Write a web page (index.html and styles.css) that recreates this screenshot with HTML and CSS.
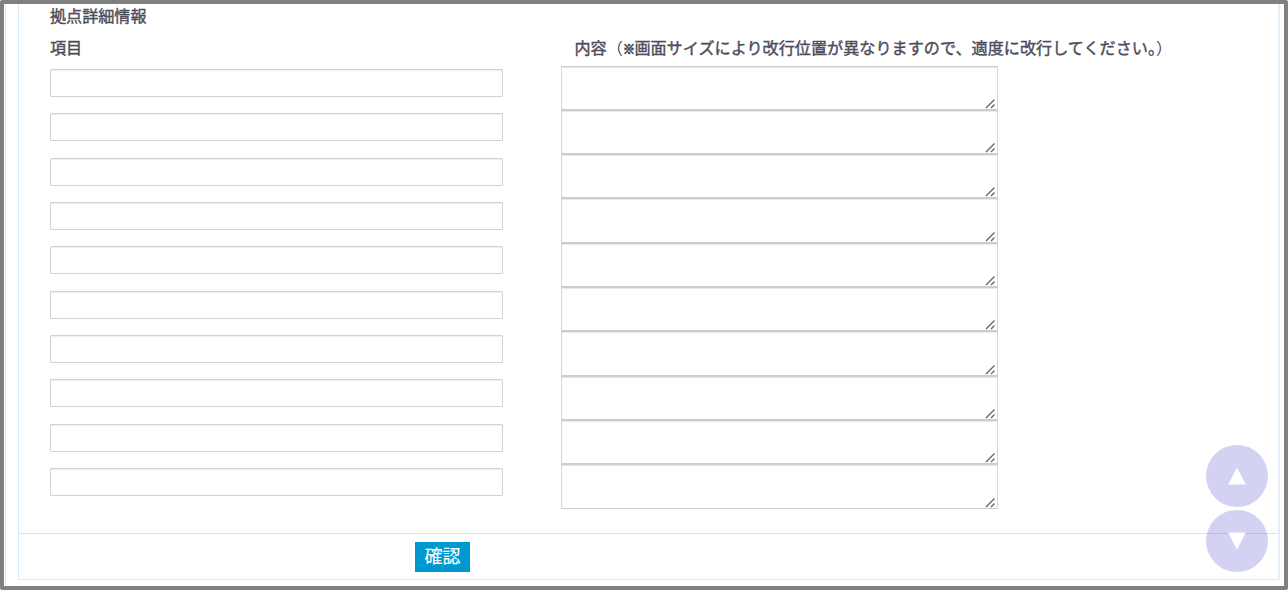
FILE: index.html
```html
<!DOCTYPE html>
<html lang="ja">
<head>
<meta charset="utf-8">
<title>拠点詳細情報</title>
<link rel="stylesheet" href="styles.css">
</head>
<body>
<div class="frame">
  <div class="page">
    <form class="panel">
      <section class="details">
        <h2 class="title">拠点詳細情報</h2>
        <div class="heads">
          <span>項目</span>
          <span class="content-head">内容<span class="light">（</span><span class="mark">※</span>画面サイズにより改行位置が異なりますので、適度に改行してください<span class="half">。<span class="light">）</span></span></span>
        </div>
        <div class="rows" id="rows"></div>
      </section>
      <div class="actions"><button class="confirm" type="button">確認</button></div>
    </form>
  </div>
  <nav class="jump">
    <a class="round"><svg width="18" height="18" viewBox="0 0 18 18"><path d="M9 0.5L17.8 17.5H0.2Z" fill="#fff"/></svg></a>
    <a class="round"><svg width="18" height="18" viewBox="0 0 18 18"><path d="M0.2 0.5H17.8L9 17.8Z" fill="#fff"/></svg></a>
  </nav>
</div>
<script src="rows.js"></script>
</body>
</html>
```
FILE: styles.css
```css
* { box-sizing: border-box; }
body {
  margin: 0;
  font-family: "Noto Sans CJK JP", sans-serif;
  color: #4c4c5a;
  background: #fff;
}
.frame {
  position: relative;
  width: 1288px;
  height: 590px;
  border: 4px solid #808080;
  border-radius: 2px;
  overflow: hidden;
}
.page {
  height: 582px;
  margin-left: 1px;
  border-left: 1px solid #d9e8f5;
  padding-left: 12px;
}
.panel {
  width: 1262px;
  height: 576px;
  border: solid #d9e9f7;
  border-width: 0 2px 1px 1px;
  border-right-color: #e3eefb;
}
.details {
  height: 530px;
  padding-left: 31px;
  border-bottom: 1px solid #cfe5f7;
}
.title, .heads {
  margin: 0;
  font-size: 16.1px;
  font-weight: 400;
  -webkit-text-stroke: 0.4px currentColor;
  line-height: 22px;
  white-space: nowrap;
}
.heads {
  display: grid;
  grid-template-columns: 524px 1fr;
  margin-top: 9px;
  line-height: 24px;
}
.content-head { letter-spacing: 0.03px; padding-left: 0.5px; }
.light { -webkit-text-stroke: 0; }
.mark {
  display: inline-block;
  width: 11.5px;
  font-size: 12px;
  -webkit-text-stroke: 0.9px currentColor;
}
.half { font-feature-settings: "halt"; }
.rows {
  display: grid;
  grid-auto-rows: 44.33px;
  padding-top: 4.5px;
}
.row {
  display: grid;
  grid-template-columns: 453px 437px;
  column-gap: 58px;
}
.item {
  width: 453px;
  height: 28px;
  margin: 3.5px 0 0;
  border: 1px solid #d2d2d2;
  border-radius: 1px;
  box-shadow: inset 0 1px 1px #eee;
  outline: 0;
}
.cell { position: relative; height: 44.33px; }
.content {
  display: block;
  width: 437px;
  height: 100%;
  resize: none;
  margin: 0;
  border: 1px solid #ccc;
  border-left-color: #d8d8d8;
  border-right-color: #d8d8d8;
  box-shadow: inset 0 1px 1px #e8e8e8;
  outline: 0;
}
.grip { position: absolute; right: 2px; bottom: 1px; }
.actions { padding: 8px 0 0 396px; }
.confirm {
  display: block;
  width: 55px;
  height: 30px;
  padding: 0 0 3px;
  border: 0;
  background: #0099cf;
  color: #fff;
  font: 400 18px/27px "Noto Sans CJK JP", sans-serif;
  -webkit-text-stroke: 0.1px #fff;
}
.jump {
  position: absolute;
  left: 1202px;
  top: 441px;
  display: grid;
  gap: 3px;
}
.round {
  display: flex;
  align-items: center;
  justify-content: center;
  width: 62px;
  height: 62px;
  border-radius: 50%;
  background: rgba(83, 75, 205, 0.25);
}
```
FILE: rows.js
```js
const rows = document.getElementById("rows");
for (let i = 0; i < 10; i++) {
  const row = document.createElement("div");
  row.className = "row";
  row.innerHTML = `<input class="item" type="text">
    <div class="cell"><textarea class="content"></textarea>
    <svg class="grip" width="11" height="11" viewBox="0 0 11 11"><path d="M1 10L9.5 1.5M6 10L9.5 6.5" stroke="#666" stroke-width="1.4"/></svg></div>`;
  rows.appendChild(row);
}
```
